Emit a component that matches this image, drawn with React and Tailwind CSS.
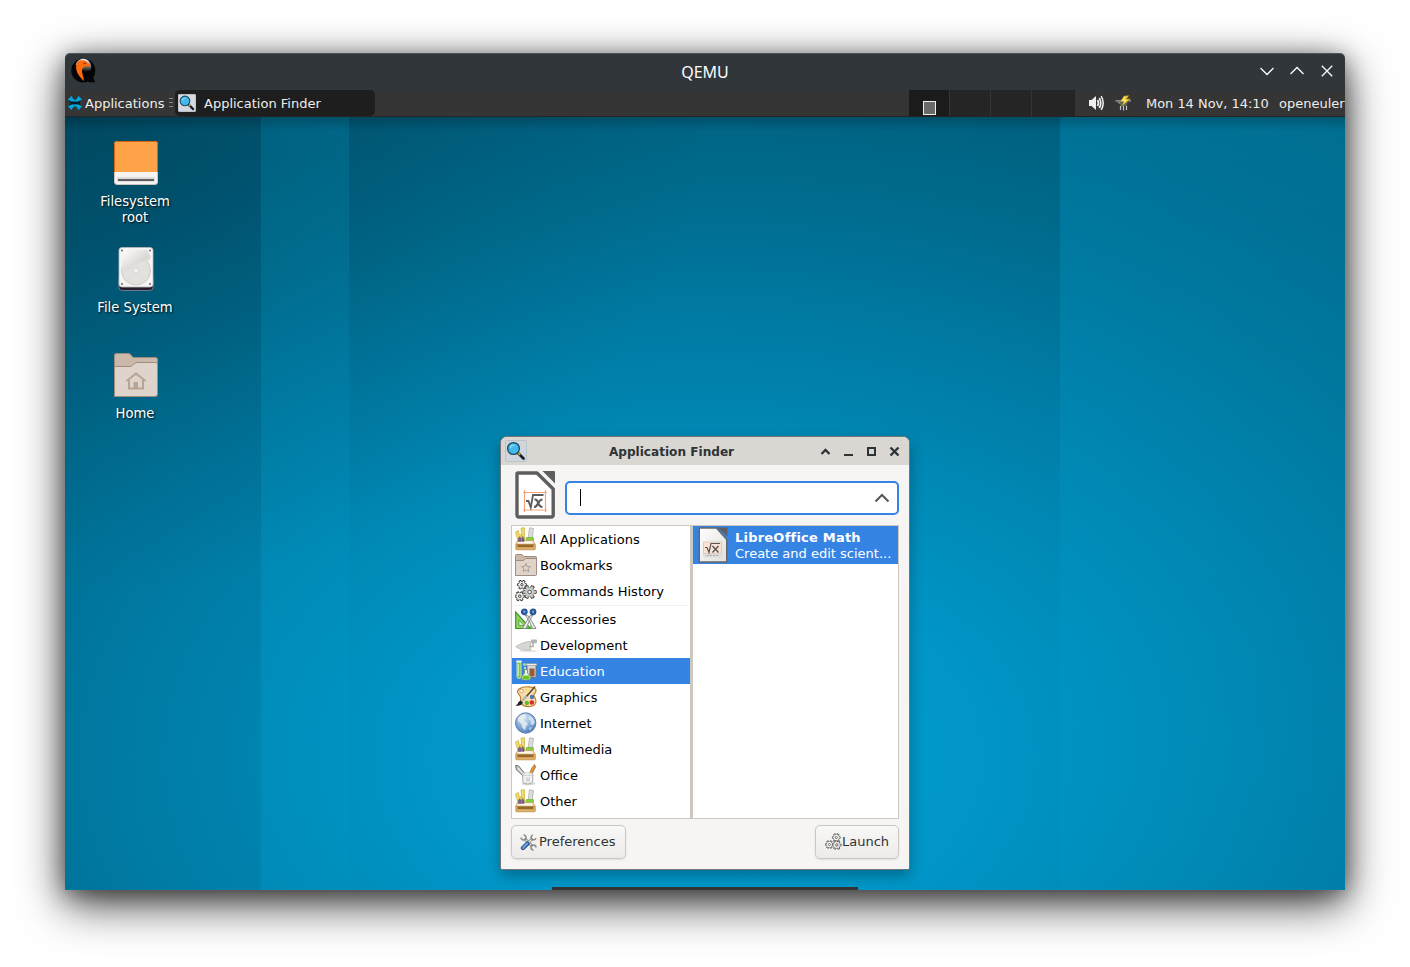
import React from "react";

function QemuLogo() {
  return (
    <svg width="26" height="26" viewBox="0 0 26 26">
      <defs>
        <linearGradient id="qg" x1="0" y1="0" x2="0" y2="1">
          <stop offset="0" stopColor="#f0f0f0" />
          <stop offset="0.5" stopColor="#8a8a8a" />
          <stop offset="1" stopColor="#0a0a0a" />
        </linearGradient>
      </defs>
      <circle cx="12.300" cy="12.500" r="12" fill="#050505" />
      <path d="M17 20 L21.500 17 L24 24.500 L17 24 Z" fill="#050505" />
      <path d="M4.500 7 C6 2.500 9.500 0.800 12.500 0.800 C17 0.800 20.500 5 20.300 10 C19.500 14 17 14 13 13 L10 10 Z" fill="url(#qg)" />
      <path d="M6.500 4 C8.500 1.600 13.500 1.800 16 4.200 L19.500 7.500 C18.500 8.800 16.500 8.500 14.500 8.300 C11.800 9 10.500 11.500 11.200 14.500 C11.700 17.500 13 19.500 12.800 23 C9.500 19.500 6.500 16.500 5.500 12.500 C4.800 9.500 5 6 6.500 4 Z" fill="#ff6a0c" />
      <path d="M12 4.800 L15 5 L14 6.500 Z" fill="#5b2408" />
    </svg>
  );
}

function XfceLogo() {
  return (
    <svg width="14" height="14" viewBox="0 0 14 14">
      <path d="M2.500 2.500 L11.500 11.500 M11.500 2.500 L2.500 11.500" stroke="#00a8e0" strokeWidth="3.800" />
      <path d="M0.500 4 L4 0.500 M10 0.500 L13.500 4 M0.500 10 L4 13.500 M10 13.500 L13.500 10" stroke="#00a8e0" strokeWidth="1.500" />
      <path d="M0.500 5 L4.500 5.500 L10 5.500 L12.500 4.500 L11.500 7 L12.500 9 L8 8.300 L4 8.500 L1 9.500 L3 7 Z" fill="#061d28" />
    </svg>
  );
}

function Magnifier({ size, frame, line }) {
  return (
    <svg width={size} height={size} viewBox="0 0 22 22">
      <rect x="0.500" y="0.500" width="21" height="21" rx="1" fill={frame} stroke={line} />
      <path d="M13 13 L18.500 18.500" stroke="#16202a" strokeWidth="2.800" strokeLinecap="round" />
      <path d="M13 12.500 L15 15" stroke="#d3b51c" strokeWidth="1.600" />
      <circle cx="8.500" cy="8.500" r="5.900" fill="#42b9ea" stroke="#1c4860" strokeWidth="1.300" />
      <path d="M4.500 7.500 C5 4.500 8 3.800 11.500 5 C9 5.500 7 6 5.500 8.500 Z" fill="#7fd6f5" />
    </svg>
  );
}

function Speaker() {
  return (
    <svg width="17" height="16" viewBox="0 0 17 16" fill="none" stroke="#f0f0f0">
      <path d="M1 5 H3.500 L8 1 V15 L3.500 11 H1 Z" fill="#f0f0f0" stroke="none" />
      <path d="M9.500 5 Q11.400 8 9.500 11" strokeWidth="1.700" />
      <path d="M11.300 3 Q14.200 8 11.300 13" strokeWidth="1.700" />
      <path d="M13.200 1.200 Q17.200 8 13.200 14.800" strokeWidth="1.500" />
    </svg>
  );
}

function PowerPlug() {
  return (
    <svg width="17" height="16" viewBox="0 0 17 16">
      <path d="M0.500 5.800 H16 M3 7 L6 9" stroke="#99a5a5" strokeWidth="1.200" />
      <path d="M5 7 L12.500 7 L12 11 H5.500 Z" fill="#566464" />
      <path d="M5.500 11 V15 M8.500 11 V15.500 M11.500 11 V15" stroke="#bec5c5" strokeWidth="1.200" />
      <path d="M9 1 L5 7 L9 6.500 L6 12 L15.500 3.800 L11.500 4 L14 0.500 Z" fill="#f2cc35" stroke="#8b701b" strokeWidth="0.500" />
      <path d="M10 1.800 L7.500 5.600 L10.500 5.300 L9 7.500" stroke="#fff3a0" strokeWidth="0.900" fill="none" />
    </svg>
  );
}

function DriveOrange() {
  return (
    <svg width="46" height="46" viewBox="0 0 46 46">
      <rect x="1.500" y="1.500" width="43" height="43" rx="2.500" fill="#f6f5f4" stroke="#c9c6c2" />
      <path d="M1.500 32 V3.500 Q1.500 1.500 3.500 1.500 H42.500 Q44.500 1.500 44.500 3.500 V32 Z" fill="#ffa348" />
      <path d="M1.500 32 V3.500 Q1.500 1.500 3.500 1.500 H42.500 Q44.500 1.500 44.500 3.500 V32" fill="none" stroke="#d8660c" />
      <rect x="4" y="37" width="38" height="5" rx="1" fill="#deddda" />
      <rect x="5" y="39" width="36" height="2" fill="#5e5c64" />
    </svg>
  );
}

function HardDisk() {
  return (
    <svg width="38" height="46" viewBox="0 0 38 46">
      <defs>
        <linearGradient id="hd" x1="0" y1="0" x2="1" y2="1">
          <stop offset="0" stopColor="#ffffff" />
          <stop offset="0.250" stopColor="#f1f0ef" />
          <stop offset="0.600" stopColor="#d8d7d5" />
          <stop offset="1" stopColor="#f3f2f0" />
        </linearGradient>
      </defs>
      <rect x="2" y="30" width="34" height="14.500" rx="3" fill="#241f31" stroke="#8a898e" strokeWidth="0.800" />
      <rect x="2" y="1.500" width="34" height="39.500" rx="3" fill="#f6f5f4" stroke="#bdbbb8" strokeWidth="0.800" />
      <circle cx="19" cy="24.500" r="14.500" fill="#e2e1de" stroke="#c0bfbc" strokeWidth="0.700" />
      <path d="M8 3.500 H30 L33 9 Q35 13 31 15 Q22 14 14 22 L5 27 Q6 20 4 16 Q2 12 4 8 Z" fill="url(#hd)" />
      <circle cx="19" cy="24.500" r="2.500" fill="#f3f2f0" stroke="#c8c6c2" strokeWidth="0.600" />
      <g fill="#6b696e">
        <circle cx="5" cy="4.500" r="1" />
        <circle cx="33" cy="4.500" r="1" />
        <circle cx="5" cy="38" r="1" />
        <circle cx="33" cy="38" r="1" />
      </g>
    </svg>
  );
}

function HomeFolder() {
  return (
    <svg width="46" height="46" viewBox="0 0 46 46">
      <path d="M1.500 22 V3 Q1.500 1.500 3.500 1.500 H15 Q17 1.500 18 3 L20 5.500 H42.500 Q44.500 5.500 44.500 7.500 V22 Z" fill="#cab9ab" stroke="#a08d7e" />
      <path d="M1.500 44.500 V14.500 H17 Q19 14.500 20.500 12.500 Q22.500 10.500 24 10.500 H42.500 Q44.500 10.500 44.500 12.500 V42 Q44.500 44.500 42 44.500 Z" fill="#ded4cb" stroke="#a08d7e" />
      <path d="M13.500 29 L23 21.500 L32.500 29" fill="none" stroke="#b8a494" strokeWidth="2" />
      <path d="M16 27.500 V36.500 H30 V27.500" fill="none" stroke="#b8a494" strokeWidth="2" />
      <rect x="20.500" y="30" width="4.500" height="7" fill="#b8a494" />
    </svg>
  );
}

function MathDocument() {
  return (
    <svg width="42" height="50" viewBox="0 0 42 50">
      <path d="M4 3 H23 L39.200 19 V45 Q39.200 47 37 47 H5 Q3 47 3 45 V4 Q3 3 4 3 Z" fill="#fff" stroke="#5e5e5e" strokeWidth="3.400" strokeLinejoin="round" />
      <path d="M28.500 1 H40 Q41 1 41 2 V13.500 Z" fill="#5e5e5e" />
      <g stroke="#f3a578" strokeWidth="1.200" fill="none">
        <path d="M10.500 20 V42 M31.500 20 V42 M9 22.500 H33 M9 40 H33" />
      </g>
      <path d="M12 31 H14.500 L16.800 37.500 L19 25 H29.500" fill="none" stroke="#5c5c5c" strokeWidth="1.800" />
      <path d="M20.500 29.500 Q23 29 24.300 32.800 Q25.500 37 28.500 37 M28.500 29.500 Q26 29.500 24 33.500 Q22.500 37 20 37" fill="none" stroke="#5c5c5c" strokeWidth="2.100" />
    </svg>
  );
}

function MathSmall() {
  return (
    <svg width="30" height="36" viewBox="0 0 30 36">
      <defs>
        <linearGradient id="ms" x1="0" y1="0" x2="1" y2="1">
          <stop offset="0" stopColor="#ffffff" />
          <stop offset="1" stopColor="#dfdfdd" />
        </linearGradient>
      </defs>
      <path d="M1.300 1 H18.500 L28.700 12.500 V35 H1.300 Z" fill="url(#ms)" stroke="#666" strokeWidth="1.400" />
      <path d="M19.500 0.500 H29.400 V9.500 Z" fill="#606060" />
      <rect x="5.500" y="15" width="18" height="11.500" fill="#fbe2d4" stroke="#d4c3b8" strokeWidth="0.800" />
      <rect x="5.500" y="26.500" width="18" height="4" fill="#dddad7" />
      <path d="M7 20.500 H9 L11 25.500 L13 16.500 H22" fill="none" stroke="#555" strokeWidth="1.200" />
      <path d="M14.500 19 L20.500 25.500 M20.500 19 L14.500 25.500" stroke="#555" strokeWidth="1.400" />
      <path d="M9 28.500 H21" stroke="#b5b3b1" strokeDasharray="2 1" />
    </svg>
  );
}

function ToolBox() {
  return (
    <svg width="22" height="24" viewBox="0 0 22 24">
      <path d="M6 1 L9.500 0.800 V14 H7.500 Z" fill="#f2dc67" stroke="#c9ae3e" strokeWidth="0.700" />
      <path d="M0.500 5 L3.300 3.500 L4.300 8 L6.500 7.500 L7 14 H3 Z" fill="#f2dc67" stroke="#c9ae3e" strokeWidth="0.700" />
      <path d="M14.500 0.800 L18.500 1.500 L17 12.500 H13 Z" fill="#dcdedb" stroke="#a4a7a2" strokeWidth="0.700" />
      <rect x="11" y="10.500" width="7.500" height="3" rx="0.500" fill="#86d13e" stroke="#5f9f25" strokeWidth="0.500" />
      <path d="M2.500 13.500 H18 L20.500 17.500 H0.500 Z" fill="#efd8b0" stroke="#bd924f" strokeWidth="0.600" />
      <path d="M4 14.300 H16.500 L18 16.800 H2.800 Z" fill="#fdf8ee" />
      <path d="M3.300 14.500 V11.500 L4.800 9.500 L6 11.500 V14.500 Z M6.800 11.500 L7.800 9.500 L9 11.500 V14.500 H6.800 Z" fill="#80618e" stroke="#543c60" strokeWidth="0.400" />
      <rect x="0.800" y="17.300" width="19.500" height="5.500" rx="0.800" fill="#e0b066" stroke="#b4873f" strokeWidth="0.700" />
      <rect x="2.500" y="17.600" width="16" height="2.600" fill="#94672e" />
    </svg>
  );
}

function BookmarkFolder() {
  return (
    <svg width="22" height="22" viewBox="0 0 22 22">
      <path d="M0.500 12 V1.500 Q0.500 0.500 1.500 0.500 H7 L9 2.500 H20.500 Q21.500 2.500 21.500 3.500 V12 Z" fill="#cab9ab" stroke="#a08d7e" />
      <path d="M0.500 21.500 V6.500 H8.500 L10.500 4.500 H21.500 V20.500 Q21.500 21.500 20.500 21.500 Z" fill="#ded4cb" stroke="#a08d7e" />
      <path d="M11 9.500 L12.200 12.500 L15.300 12.700 L13 14.700 L13.800 17.700 L11 16 L8.200 17.700 L9 14.700 L6.700 12.700 L9.800 12.500 Z" fill="none" stroke="#b19d8e" />
    </svg>
  );
}

const toothAngles = [0, 60, 120, 180, 240, 300];

function Cog({ x, y, r, fill, line }) {
  return (
    <g transform={`translate(${x} ${y})`}>
      {toothAngles.map((a) => (
        <rect key={a} transform={`rotate(${a + 30})`} x={-r * 0.28} y={-r * 1.2} width={r * 0.56} height={r * 0.6} rx="0.4" fill={fill} stroke={line} strokeWidth="0.900" />
      ))}
      <circle r={r * 0.8} fill={fill} />
      <circle r={r * 0.32} fill="#fff" stroke={line} strokeWidth="0.900" />
    </g>
  );
}

function Cogs() {
  return (
    <svg width="22" height="22" viewBox="0 0 22 22">
      <Cog x={7} y={4.7} r={3.8} fill="#f4f4f2" line="#2e302d" />
      <Cog x={4.8} y={16.2} r={3.9} fill="#f0f0ee" line="#2e302d" />
      <Cog x={14.6} y={12} r={5.6} fill="#c8cac6" line="#4a4c49" />
    </svg>
  );
}

function LaunchCogs() {
  return (
    <svg width="17" height="18" viewBox="0 0 17 18">
      <Cog x={11.3} y={4.5} r={3.3} fill="#fafafa" line="#5a5c59" />
      <Cog x={4.4} y={11.5} r={3.3} fill="#fafafa" line="#5a5c59" />
      <Cog x={11.8} y={12} r={3.7} fill="#ececea" line="#5a5c59" />
    </svg>
  );
}

function Accessories() {
  return (
    <svg width="22" height="22" viewBox="0 0 22 22">
      <path d="M0.700 4 V20.500 H15.500 Z" fill="#8ed464" stroke="#3d962c" strokeWidth="1.200" />
      <path d="M4 12 V17.500 H9 Z" fill="#e5f6da" stroke="#3d962c" strokeWidth="0.700" />
      <path d="M17 14 L20.500 20.500 H15 Z" fill="#81cb57" stroke="#4b9b32" strokeWidth="0.500" />
      <path d="M10 7 L13.500 8 L21 20.500 L17.500 20.500 L14 12.500 Z M18 7 L14.500 8 L7.500 20.500 L11 20.500 L14.500 12.500 Z" fill="#eee" stroke="#858885" strokeWidth="0.900" />
      <circle cx="9.300" cy="3.800" r="2.300" fill="#7fa5d3" stroke="#27559a" strokeWidth="2.200" />
      <circle cx="18" cy="3.800" r="2.300" fill="#7fa5d3" stroke="#27559a" strokeWidth="2.200" />
    </svg>
  );
}

function Trowel() {
  return (
    <svg width="22" height="22" viewBox="0 0 22 22">
      <ellipse cx="13" cy="17" rx="9" ry="1.300" fill="#e4e4e2" />
      <path d="M0.800 12.500 C5 10 10 7.500 15.500 7.500 V16 C9 16.500 4 15.500 0.800 12.500 Z" fill="#d6d8d3" stroke="#b4b7b1" strokeWidth="0.800" />
      <path d="M14 12.500 H18 V8" fill="none" stroke="#b0b3ad" strokeWidth="1.600" />
      <rect x="16" y="5.500" width="6" height="3.800" rx="1" fill="#b1b4ae" />
    </svg>
  );
}

function Education() {
  return (
    <svg width="22" height="22" viewBox="0 0 22 22">
      <rect x="12" y="4.500" width="9" height="13" rx="1" fill="#d6d8d6" stroke="#6f7471" strokeWidth="0.900" />
      <rect x="14.500" y="8.500" width="5" height="8" fill="#9a5a35" />
      <rect x="11" y="3.500" width="11" height="2" rx="1" fill="#eff0ee" stroke="#7c807d" strokeWidth="0.500" />
      <rect x="2" y="1.500" width="4" height="17" rx="2" fill="#75cf3a" stroke="#cbdbc8" />
      <rect x="1" y="0.500" width="6" height="2" rx="1" fill="#e9f1e8" />
      <path d="M3.300 4 V16" stroke="#d4f7b8" />
      <path d="M9.500 9.500 H12.500 V13 L15.500 17 Q16 20 13.500 20 H8.500 Q6 20 6.500 17 L9.500 13 Z" fill="#e7f4e2" stroke="#7a8f78" strokeWidth="0.900" />
      <path d="M8.500 15.500 H13.500 L14.800 18 Q14.500 19.500 13 19.500 H9 Q7.200 19.500 7.200 18 Z" fill="#67c928" />
      <circle cx="9.500" cy="4.500" r="1.500" fill="#a9d88b" />
      <circle cx="10" cy="8" r="1" fill="#dfeeda" />
    </svg>
  );
}

function Palette() {
  return (
    <svg width="22" height="22" viewBox="0 0 22 22">
      <path d="M4 3 C9 -0.500 20 0.500 21 4 C21.500 6.500 18.500 7.500 19 9.500 C20 12 22 14 20.500 17.500 C18 21.500 10 21.500 7 18.500 C4 15 7 13 5 10 C3 7 1 5.500 4 3 Z" fill="#f5dcae" stroke="#c17a22" strokeWidth="1.100" />
      <circle cx="6.500" cy="5" r="1.800" fill="#fff" stroke="#c98733" strokeWidth="0.700" />
      <circle cx="12" cy="3.800" r="1.800" fill="#f6e07a" />
      <circle cx="17" cy="11" r="2.200" fill="#4477c8" />
      <circle cx="16.800" cy="16.500" r="2.300" fill="#dd2b1f" />
      <circle cx="11.800" cy="17" r="2.200" fill="#58bd28" />
      <path d="M20 0.500 L11 11" stroke="#6e4a22" strokeWidth="1.600" />
      <path d="M11.500 10 L7 15" stroke="#b5b8b4" strokeWidth="2.600" />
      <path d="M5.500 14.500 L8 16.500 Q6 20.500 0.500 19.500 Q3 18.500 3.500 16 Z" fill="#232426" />
    </svg>
  );
}

function Globe() {
  return (
    <svg width="22" height="22" viewBox="0 0 22 22">
      <defs>
        <radialGradient id="gl" cx="0.400" cy="0.250" r="0.800">
          <stop offset="0" stopColor="#dfebf7" />
          <stop offset="0.500" stopColor="#8db3dc" />
          <stop offset="1" stopColor="#4a7cb9" />
        </radialGradient>
      </defs>
      <circle cx="10.700" cy="11" r="10.200" fill="url(#gl)" stroke="#5b7dab" strokeWidth="1" />
      <path d="M3 6 C5.500 3 8 2 11.500 2.500 L10 5.500 L7.500 6.500 L8.500 8.500 L11.500 10.500 L13 12 L11 14.500 L10 18.500 L7.500 16 L6.500 12 L3 9 Z" fill="#f0f4ee" fillOpacity="0.750" />
      <path d="M14 3.500 L18 6 L20 10 L18 13.500 L15.500 12 L16 9 L13.500 7.500 Z M14 16 L17 15 L15 18.500 Z" fill="#ecf1ee" fillOpacity="0.700" />
    </svg>
  );
}

function PenCup() {
  return (
    <svg width="22" height="22" viewBox="0 0 22 22">
      <ellipse cx="13.500" cy="19.500" rx="7" ry="1.800" fill="#dadad8" />
      <path d="M19.500 0.500 L20.500 3 L16 12 L13.500 11.500 L17 4 Z" fill="#df9b3a" stroke="#8f5710" strokeWidth="0.700" />
      <path d="M0.500 1.500 L3.500 1.800 L11 11 L8.500 12 L1.500 6 Z" fill="#c3c6c1" stroke="#656864" strokeWidth="0.900" />
      <path d="M3 4 L9 11" stroke="#efefef" strokeWidth="1.100" />
      <path d="M7.500 10 L8 18 Q8.500 20 12.700 20 Q17 20 17.500 18 L18 10" fill="#f0f0ee" fillOpacity="0.850" stroke="#a0a29e" strokeWidth="0.900" />
      <ellipse cx="12.700" cy="10" rx="5.300" ry="1.400" fill="#f9f9f8" fillOpacity="0.700" stroke="#bdbfbc" strokeWidth="0.700" />
      <rect x="11" y="13.500" width="4" height="4" fill="#d3d5d2" />
    </svg>
  );
}

function Wrenches() {
  return (
    <svg width="17" height="17" viewBox="0 0 17 17">
      <path d="M4.500 4.500 L12.500 12.500" stroke="#777a76" strokeWidth="2.800" />
      <path d="M4.500 4.500 L12.500 12.500" stroke="#e5e6e3" strokeWidth="1.300" />
      <path d="M1 3.500 A2.500 2.500 0 1 0 3.500 1 M16 13.500 A2.500 2.500 0 1 0 13.500 16" fill="none" stroke="#8a8d89" strokeWidth="1.500" />
      <path d="M12.500 4.500 L8 9" stroke="#777a76" strokeWidth="2.600" />
      <path d="M12.500 4.500 L8 9" stroke="#f0f0ee" strokeWidth="1.200" />
      <path d="M12.800 1 A2.500 2.500 0 1 0 16 4.200" fill="none" stroke="#858884" strokeWidth="1.500" />
      <path d="M7.300 9.700 L3 14" stroke="#274f8e" strokeWidth="4.400" strokeLinecap="round" />
      <path d="M7.100 9.700 L3 13.800" stroke="#6e9ddb" strokeWidth="2.400" strokeLinecap="round" />
    </svg>
  );
}

function Category({ icon, label, selected }) {
  return (
    <div className={selected ? "flex h-[26px] items-center gap-[3px] bg-[#3584e4] pl-[3px] text-white" : "flex h-[26px] items-center gap-[3px] pl-[3px] text-black"}>
      <span className="flex w-[22px] shrink-0 justify-center">{icon}</span>
      <span className="pt-[2px]">{label}</span>
    </div>
  );
}

function DesktopItem({ icon, label }) {
  return (
    <div className="flex h-[106px] w-[100px] flex-col items-center text-center">
      <div className="flex h-[46px] pl-[2px]">{icon}</div>
      <div className="mt-[8px] w-[84px] text-[13.200px] leading-4 text-white [text-shadow:1px_1px_2px_rgba(0,0,0,0.9)]">{label}</div>
    </div>
  );
}

function TitleBar() {
  return (
    <div className="flex h-[37px] items-center rounded-t-[5px] border-t border-[#4d565c] bg-[#31363b] pr-[10px] pb-[2px] pl-[6px]">
      <div className="w-[100px]"><QemuLogo /></div>
      <div className="flex-1 pt-[2px] pl-[4px] text-center font-['Noto_Sans',sans-serif] text-[16px] text-[#fcfcfc]">QEMU</div>
      <div className="flex w-[100px] justify-end gap-[14px]">
        <svg width="16" height="16" viewBox="0 0 16 16" fill="none" stroke="#fcfcfc" strokeWidth="1.300"><path d="M1.500 5 L8 11.500 L14.500 5" /></svg>
        <svg width="16" height="16" viewBox="0 0 16 16" fill="none" stroke="#fcfcfc" strokeWidth="1.300"><path d="M1.500 11 L8 4.500 L14.500 11" /></svg>
        <svg width="16" height="16" viewBox="0 0 16 16" fill="none" stroke="#fcfcfc" strokeWidth="1.300"><path d="M2.800 2.800 L13.200 13.200 M13.200 2.800 L2.800 13.200" /></svg>
      </div>
    </div>
  );
}

function Panel() {
  return (
    <div className="flex h-[27px] items-stretch overflow-hidden border-b border-[#252525] bg-[#353535] text-[13px] whitespace-nowrap text-[#eeeeec]">
      <div className="flex w-[109px] items-center pl-[3px]">
        <XfceLogo />
        <span className="w-[84px] pt-[2px] pl-[3px]">Applications</span>
        <span className="flex flex-col gap-[3px] pb-[2px] pl-[3px]">
          <i className="h-px w-1 bg-[#888]" /><i className="h-px w-1 bg-[#888]" /><i className="h-px w-1 bg-[#888]" />
        </span>
      </div>
      <div className="ml-px flex w-[200px] items-center rounded-[5px] bg-[#1e1e1e] pl-[3px]">
        <Magnifier size={18} frame="#d4d8df" line="#d4d8df" />
        <span className="pt-[2px] pl-[8px]">Application Finder</span>
      </div>
      <div className="flex-1" />
      <div className="flex w-[166px] gap-px">
        <div className="flex w-[40px] items-end justify-center bg-[#1b1b1b] pb-px">
          <span className="h-[14px] w-[13px] border border-[#eeeeec] bg-[#686868]" />
        </div>
        <div className="w-[40px] bg-[#252525]" />
        <div className="w-[40px] bg-[#252525]" />
        <div className="w-[43px] bg-[#252525]" />
      </div>
      <div className="flex w-[270px] items-center pl-[13px]">
        <Speaker />
        <span className="ml-[10px]"><PowerPlug /></span>
        <span className="ml-[14px] w-[133px] pt-[2px] text-[12.950px]">Mon 14 Nov, 14:10</span>
        <span className="pt-[2px]">openeuler</span>
      </div>
    </div>
  );
}

const topCategories = [
  { label: "All Applications", icon: <ToolBox /> },
  { label: "Bookmarks", icon: <BookmarkFolder /> },
  { label: "Commands History", icon: <Cogs /> },
];

const categories = [
  { label: "Accessories", icon: <Accessories /> },
  { label: "Development", icon: <Trowel /> },
  { label: "Education", icon: <Education />, selected: true },
  { label: "Graphics", icon: <Palette /> },
  { label: "Internet", icon: <Globe /> },
  { label: "Multimedia", icon: <ToolBox /> },
  { label: "Office", icon: <PenCup /> },
  { label: "Other", icon: <ToolBox /> },
];

function Finder() {
  return (
    <div className="absolute top-[319px] left-[435px] flex h-[434px] w-[410px] flex-col overflow-hidden rounded-t-[7px] rounded-b-[2px] border border-[#6d767a] bg-[#f6f5f4] text-[13px] shadow-[0_6px_14px_rgba(0,0,0,0.28)]">
      <div className="flex h-[28px] items-center bg-[#dad6d2] pl-[4px] text-[#2e3436]">
        <Magnifier size={22} frame="#cfd6db" line="#b9c4cd" />
        <div className="flex-1 pt-[2px] pl-[17px] text-center text-[12.100px] font-bold">Application Finder</div>
        <div className="mr-[7px] ml-[20px] flex items-center gap-[9px]">
          <svg width="14" height="14" viewBox="0 0 14 14"><path d="M2.500 10 L6.500 6 L10.500 10" stroke="#2e3436" strokeWidth="2.300" fill="none" /></svg>
          <svg width="14" height="14" viewBox="0 0 14 14"><path d="M2 11 H11" stroke="#2e3436" strokeWidth="2" /></svg>
          <svg width="14" height="14" viewBox="0 0 14 14"><rect x="3" y="4" width="7" height="7" stroke="#2e3436" strokeWidth="2" fill="none" /></svg>
          <svg width="14" height="14" viewBox="0 0 14 14"><path d="M2.500 3.500 L10.500 11.500 M10.500 3.500 L2.500 11.500" stroke="#2e3436" strokeWidth="2.400" /></svg>
        </div>
      </div>
      <div className="flex h-[60px] items-center px-[10px]">
        <div className="ml-[3px] w-[51px]"><MathDocument /></div>
        <div className="mt-[6px] flex h-[34px] flex-1 items-center justify-between rounded-[5px] border-2 border-[#3584e4] bg-white pr-[7px] pl-[13px]">
          <span className="mb-px h-[17px] w-px bg-black" />
          <svg width="16" height="16" viewBox="0 0 16 16" fill="none" stroke="#50575a" strokeWidth="2"><path d="M1.500 11.500 L8 5 L14.500 11.500" /></svg>
        </div>
      </div>
      <div className="mx-[10px] flex h-[294px] border border-[#cdc7c2] bg-white">
        <div className="w-[178px]">
          {topCategories.map((c) => <Category key={c.label} {...c} />)}
          <div className="px-[2px] pt-px"><div className="h-px bg-[#f0efee]" /></div>
          {categories.map((c) => <Category key={c.label} {...c} />)}
        </div>
        <div className="w-[3px] bg-[#cdc7c2]" />
        <div className="flex-1">
          <div className="flex h-[38px] items-center bg-[#3584e4] pl-[5px] text-white">
            <MathSmall />
            <div className="pt-[2px] pl-[7px] leading-4 whitespace-nowrap">
              <div className="text-[13px] font-bold tracking-[0.220px]">LibreOffice Math</div>
              <div>Create and edit scient...</div>
            </div>
          </div>
        </div>
      </div>
      <div className="mx-[10px] mt-[6px] flex justify-between text-[#2e3436]">
        <div className="flex h-[34px] w-[115px] items-center rounded-[5px] border border-[#cdc7c2] bg-linear-to-b from-[#f8f8f7] to-[#edebe9] pl-[8px] shadow-[0_1px_2px_rgba(0,0,0,0.1)]">
          <Wrenches /><span className="pl-[2px]">Preferences</span>
        </div>
        <div className="flex h-[34px] w-[84px] items-center rounded-[5px] border border-[#cdc7c2] bg-linear-to-b from-[#f8f8f7] to-[#edebe9] pl-[9px] shadow-[0_1px_2px_rgba(0,0,0,0.1)]">
          <LaunchCogs /><span>Launch</span>
        </div>
      </div>
    </div>
  );
}

export default function App() {
  return (
    <div className="h-[967px] w-[1410px] overflow-hidden bg-white px-[65px] pt-[53px] font-['DejaVu_Sans',sans-serif]">
      <div className="h-[837px] w-[1280px] rounded-t-[5px] shadow-[0_14px_46px_rgba(0,0,0,0.75),0_4px_22px_rgba(0,0,0,0.4)]">
        <TitleBar />
        <Panel />
        <div className="relative flex h-[773px] overflow-hidden bg-[radial-gradient(ellipse_650px_480px_at_0px_0px,rgba(0,20,30,0.25),rgba(0,20,30,0.08)_65%,rgba(0,20,30,0)),radial-gradient(ellipse_1250px_820px_at_640px_640px,#009bd0_0%,#0096c7_22%,#0087b3_40%,#007aa2_54%,#006d90_67%,#006282_80%,#005c79_92%,#00526a_105%)]">
          <div className="w-[196px] bg-[#00334a]/8 pt-[23px] pl-[20px]">
            <DesktopItem icon={<DriveOrange />} label="Filesystem root" />
            <DesktopItem icon={<HardDisk />} label="File System" />
            <DesktopItem icon={<HomeFolder />} label="Home" />
          </div>
          <div className="w-[88px] bg-linear-to-b from-[#00a0d0]/20 to-[#00a0d0]/10" />
          <div className="w-[711px]" />
          <div className="flex-1 bg-linear-to-b from-[#00a8dc]/25 to-[#00a8dc]/8" />
          <div className="absolute inset-x-0 top-0 h-[14px] bg-linear-to-b from-black/20 to-transparent" />
          <Finder />
          <div className="absolute bottom-0 left-[487px] h-[3px] w-[306px] bg-[#353535]" />
        </div>
      </div>
    </div>
  );
}
